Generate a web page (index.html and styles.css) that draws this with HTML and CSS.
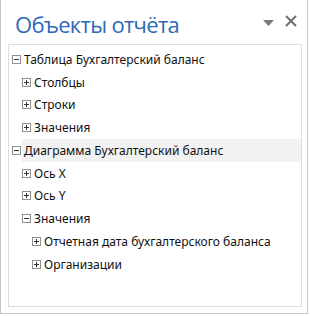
FILE: index.html
```html
<!DOCTYPE html>
<html lang="ru">
<head>
<meta charset="utf-8">
<link rel="stylesheet" href="styles.css">
</head>
<body>
<div class="frame">
  <div class="header">
    <h1 class="title">Объекты отчёта</h1>
    <div class="tools">
      <svg class="drop" width="11" height="6" viewBox="0 0 11 6"><path d="M0 0h11L5.5 6z" fill="#7a7a7a"/></svg>
      <svg class="close" width="12" height="12" viewBox="0 0 12 12"><path d="M1 1l10 10M11 1L1 11" stroke="#6e6e6e" stroke-width="2"/></svg>
    </div>
  </div>
  <div class="panel">
    <div class="row l0"><span class="box minus"></span><span class="label">Таблица Бухгалтерский баланс</span></div>
    <div class="kids">
      <div class="row l1"><span class="box plus"></span><span class="label">Столбцы</span></div>
      <div class="row l1"><span class="box plus"></span><span class="label">Строки</span></div>
      <div class="row l1"><span class="box plus"></span><span class="label">Значения</span></div>
    </div>
    <div class="row l0 sel"><span class="box minus"></span><span class="label">Диаграмма Бухгалтерский баланс</span></div>
    <div class="kids">
      <div class="row l1"><span class="box plus"></span><span class="label">Ось X</span></div>
      <div class="row l1"><span class="box plus"></span><span class="label">Ось Y</span></div>
      <div class="row l1"><span class="box minus"></span><span class="label">Значения</span></div>
      <div class="row l2"><span class="box plus"></span><span class="label">Отчетная дата бухгалтерского баланса</span></div>
      <div class="row l2"><span class="box plus"></span><span class="label">Организации</span></div>
    </div>
  </div>
</div>
</body>
</html>
```
FILE: styles.css
```css
html, body {
  margin: 0;
  padding: 0;
  background: #fff;
}
body {
  font-family: "Noto Sans", "Open Sans", sans-serif;
  width: 310px;
  height: 316px;
  overflow: hidden;
}
.frame {
  box-sizing: border-box;
  width: 308px;
  height: 314px;
  border: 1px solid #c6c6c6;
  border-top: none;
  background: #fff;
  display: flex;
  flex-direction: column;
}
.header {
  height: 44px;
  display: flex;
  align-items: flex-start;
  justify-content: space-between;
}
.title {
  margin: 9px 0 0 14px;
  font-family: "Open Sans", "Noto Sans", sans-serif;
  font-weight: 400;
  font-size: 22px;
  line-height: 30px;
  letter-spacing: -0.7px;
  color: #2f68b7;
}
.tools {
  display: flex;
  align-items: center;
  gap: 11px;
  margin: 15px 10px 0 0;
}
.drop { display: block; margin-top: 3px; }
.close { display: block; }
.panel {
  box-sizing: border-box;
  margin-left: 7px;
  width: 294px;
  height: 263px;
  border: 1px solid #dedede;
  padding-top: 3px;
}
.row {
  height: 22.75px;
  display: flex;
  align-items: center;
  font-size: 12px;
  color: #111;
  white-space: nowrap;
}
.row.l0 { padding-left: 3px; }
.row.l1 { padding-left: 13px; }
.row.l2 { padding-left: 23px; }
.box {
  position: relative;
  box-sizing: border-box;
  width: 9px;
  height: 9px;
  border: 1px solid #8f8f8f;
  flex: none;
  margin-right: 3px;
}
.box::before {
  content: "";
  position: absolute;
  left: 1px;
  top: 3px;
  width: 5px;
  height: 1px;
  background: #333;
}
.box.plus::after {
  content: "";
  position: absolute;
  left: 3px;
  top: 1px;
  width: 1px;
  height: 5px;
  background: #333;
}
.label {
  padding: 0 3px 0 0;
}
.row.sel {
  background: linear-gradient(to right, transparent 13px, #f2f2f2 13px);
}
```
